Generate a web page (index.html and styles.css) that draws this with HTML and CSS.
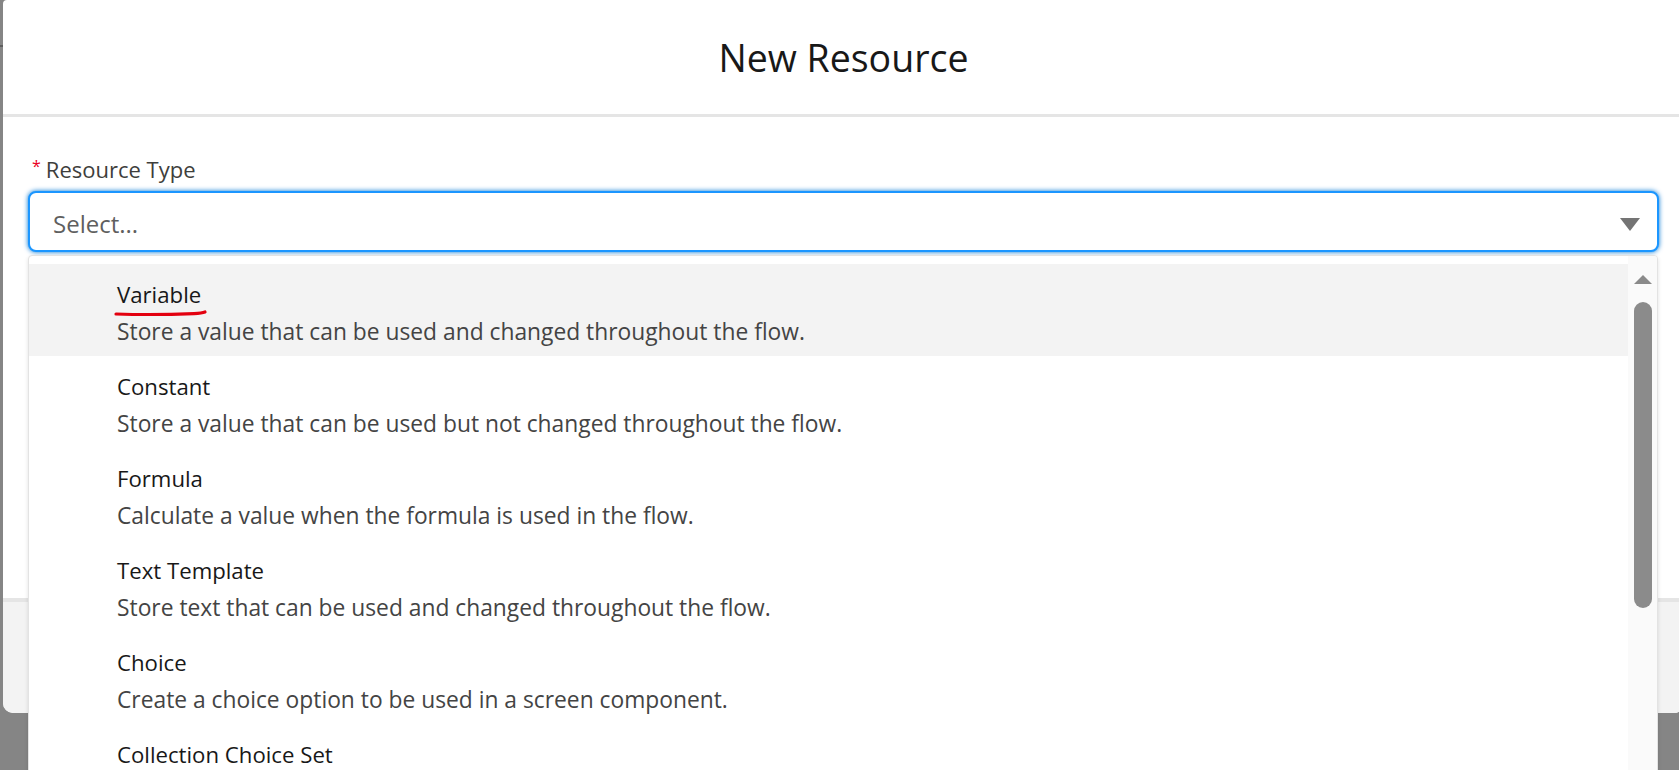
FILE: index.html
```html
<!DOCTYPE html>
<html lang="en">
<head>
<meta charset="utf-8">
<title>New Resource</title>
<link rel="stylesheet" href="styles.css">
</head>
<body>
<section class="modal" role="dialog" aria-labelledby="modal-heading">
  <header class="modal-header">
    <h2 class="modal-title" id="modal-heading">New Resource</h2>
  </header>

  <div class="modal-body">
    <div class="form-element">
      <label class="form-label"><abbr class="required" title="required">*</abbr>Resource Type</label>

      <div class="combobox">
        <div class="combobox-input">
          <span class="placeholder">Select...</span>
          <svg class="caret" width="20" height="13" viewBox="0 0 20 13" aria-hidden="true">
            <polygon points="0,0 20,0 10,13"/>
          </svg>
        </div>

        <div class="listbox" role="listbox">
          <ul class="options">
            <li class="option is-active" role="option">
              <span class="option-title">Variable<svg class="ink-mark" width="94" height="8" viewBox="0 0 94 8" aria-hidden="true"><path d="M2 5 Q 40 6.2 80 4.6 Q 88 4.2 91 3"/></svg></span>
              <span class="option-desc">Store a value that can be used and changed throughout the flow.</span>
            </li>
            <li class="option" role="option">
              <span class="option-title">Constant</span>
              <span class="option-desc">Store a value that can be used but not changed throughout the flow.</span>
            </li>
            <li class="option" role="option">
              <span class="option-title">Formula</span>
              <span class="option-desc">Calculate a value when the formula is used in the flow.</span>
            </li>
            <li class="option" role="option">
              <span class="option-title">Text Template</span>
              <span class="option-desc">Store text that can be used and changed throughout the flow.</span>
            </li>
            <li class="option" role="option">
              <span class="option-title">Choice</span>
              <span class="option-desc">Create a choice option to be used in a screen component.</span>
            </li>
            <li class="option" role="option">
              <span class="option-title">Collection Choice Set</span>
            </li>
          </ul>
          <div class="scrollbar" aria-hidden="true">
            <svg class="scroll-up" width="18" height="9" viewBox="0 0 18 9"><polygon points="0,9 18,9 9,0"/></svg>
            <div class="scroll-thumb"></div>
          </div>
        </div>
      </div>
    </div>
  </div>

  <footer class="modal-footer"></footer>
</section>
</body>
</html>
```

FILE: styles.css
```css
* {
  box-sizing: border-box;
}

html,
body {
  margin: 0;
  padding: 0;
}

body {
  height: 770px;
  overflow: hidden;
  font-family: "Open Sans", "Noto Sans", sans-serif;
  color: #181818;
  /* dimmed page behind the dialog, with the app header rule showing through */
  background-color: #858585;
  background-image: linear-gradient(to bottom,
    transparent 45px, #5e5e5e 45px, #5e5e5e 47px, transparent 47px);
}

/* ---------- dialog ---------- */

.modal {
  margin-left: 3px;
  width: 1681px;
  height: 713px;
  display: flex;
  flex-direction: column;
  background: #ffffff;
  border-radius: 4px 4px 10px 10px;
}

.modal-header {
  height: 117px;
  padding-top: 32px;
  border-bottom: 3px solid #e5e5e5;
  text-align: center;
}

.modal-title {
  margin: 0;
  font-size: 37.5px;
  font-weight: 400;
  line-height: 51px;
  color: #181818;
}

.modal-body {
  flex: 1;
  padding: 37px 25px 0;
}

.modal-footer {
  height: 115px;
  border-top: 4px solid #e5e5e5;
  background: #f3f3f3;
  border-radius: 0 0 10px 10px;
}

/* ---------- form field ---------- */

.form-label {
  display: flex;
  align-items: flex-start;
  font-size: 22px;
  line-height: 30px;
  color: #3e3e3c;
  margin-bottom: 7px;
}

.required {
  color: #ea001e;
  text-decoration: none;
  border: 0;
  font-size: 16px;
  line-height: 24px;
  margin: 0 5px 0 4px;
}

.combobox {
  position: relative;
}

.combobox-input {
  height: 61px;
  display: flex;
  align-items: center;
  justify-content: space-between;
  padding: 3px 17px 0 23px;
  border: 2px solid #1b96ff;
  border-radius: 8px;
  background: #ffffff;
  box-shadow: 0 0 5px #0176d3;
}

.placeholder {
  font-size: 24px;
  color: #5f5f5f;
}

.caret {
  fill: #747474;
  margin-top: 3px;
}

/* ---------- option list ---------- */

.listbox {
  position: absolute;
  z-index: 10;
  top: calc(100% + 3px);
  left: 0;
  right: 1px;
  height: 560px;
  display: flex;
  background: #ffffff;
  border: 1px solid #e3e3e3;
  border-radius: 4px 4px 0 0;
  box-shadow: 0 2px 4px rgba(0, 0, 0, 0.12);
  overflow: hidden;
}

.options {
  flex: 1;
  list-style: none;
  margin: 0;
  padding: 8px 0 0;
}

.option {
  display: flex;
  flex-direction: column;
  height: 92px;
  padding: 13px 0 6px 88px;
  font-size: 22.5px;
  line-height: 36.5px;
}

.option.is-active {
  background: #f3f3f3;
}

.option-title {
  position: relative;
  align-self: flex-start;
  color: #181818;
  font-size: 22.2px;
}

.option-desc {
  color: #444444;
  font-size: 22.8px;
}

/* hand-drawn red underline marking the chosen entry */
.ink-mark {
  position: absolute;
  left: -3px;
  top: 32px;
  fill: none;
  stroke: #e3000f;
  stroke-width: 3.2;
  stroke-linecap: round;
}

/* ---------- scrollbar ---------- */

.scrollbar {
  width: 29px;
  flex: none;
  display: flex;
  flex-direction: column;
  align-items: center;
  padding-top: 19px;
  background: #fafafa;
}

.scroll-up {
  fill: #8a8a8a;
}

.scroll-thumb {
  width: 18px;
  height: 306px;
  margin-top: 18px;
  border-radius: 9px;
  background: #8b8b8b;
}
```
